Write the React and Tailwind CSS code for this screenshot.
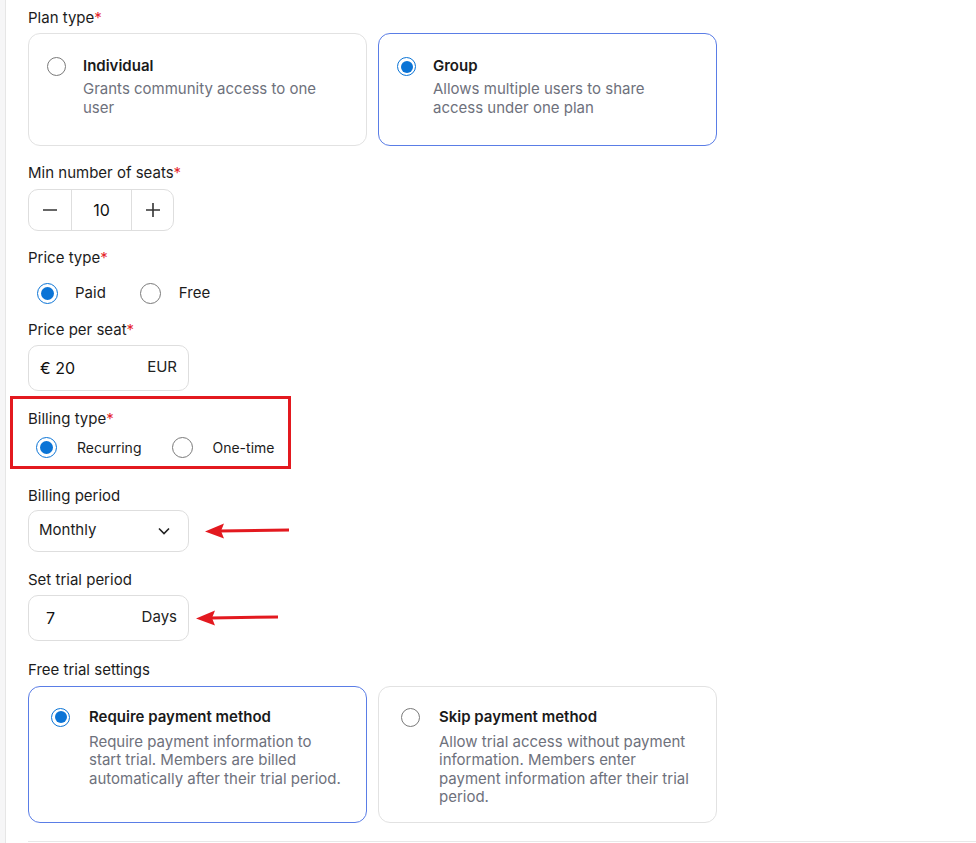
import React, { useState } from "react";

function Radio({ checked, size = "md" }) {
  return (
    <span
      className={`flex items-center justify-center rounded-full shrink-0 ${
        size === "lg" ? "w-[21px] h-[21px]" : "w-[19px] h-[19px]"
      } ${checked ? "border-[1.5px] border-[#0b74d6]" : "border-[1.5px] border-[#7a7a7a]"}`}
    >
      {checked && (
        <span
          className={`rounded-full bg-[#0b74d6] ${
            size === "lg" ? "w-[13px] h-[13px]" : "w-[12px] h-[12px]"
          }`}
        />
      )}
    </span>
  );
}

function Label({ children, required }) {
  return (
    <div className="text-[15px] leading-5 text-[#1c1c1c]">
      {children}
      {required && <span className="text-[#e5262b]">*</span>}
    </div>
  );
}

function OptionCard({ title, desc, checked, variant }) {
  const isTrial = variant === "trial";
  return (
    <div
      className={`flex rounded-[12px] border bg-white ${
        checked ? "border-[#5a7de6]" : "border-[#e2e2e2]"
      } ${isTrial ? "pl-[22px] pt-[20px] pb-[15px] pr-6" : "pl-[18px] pt-[22px] pb-[28px] pr-6"}`}
    >
      <div className="pt-[1px]">
        <Radio checked={checked} />
      </div>
      <div className={isTrial ? "ml-[19px]" : "ml-[17px]"}>
        <div className="text-[15px] leading-5 font-semibold text-[#1a1a1a]">{title}</div>
        <div
          className={`text-[15px] text-[#6e717c] ${
            isTrial ? "mt-[6px] leading-[18.5px]" : "mt-[3px] leading-[19px]"
          }`}
        >
          {desc}
        </div>
      </div>
    </div>
  );
}

function Arrow({ width }) {
  return (
    <svg width={width} height="20" viewBox={`0 0 ${width} 20`} className="shrink-0">
      <line x1="14" y1="10" x2={width} y2="9" stroke="#e3191f" strokeWidth="3" />
      <polygon points={`0,10.5 19,2.5 16,10 19,17.5`} fill="#e3191f" />
    </svg>
  );
}

export default function App() {
  const [seats, setSeats] = useState(10);

  return (
    <div className="min-h-screen bg-white flex" style={{ fontFamily: "Inter, 'Noto Sans', sans-serif" }}>
      {/* left rail */}
      <div className="w-[6px] shrink-0 bg-[#f6f6f7] border-r border-[#e6e6e6]" />

      <div className="flex-1 pl-[22px] pt-[8px]">
        {/* PLAN TYPE */}
        <Label required>Plan type</Label>
        <div className="mt-[5px] grid grid-cols-[339px_339px] gap-[11px]">
          <OptionCard title="Individual" desc="Grants community access to one user" />
          <OptionCard
            title="Group"
            desc={
              <>
                Allows multiple users to share
                <br />
                access under one plan
              </>
            }
            checked
          />
        </div>

        {/* SEATS */}
        <div className="mt-[17px]">
          <Label required>Min number of seats</Label>
          <div className="mt-[6px] flex w-[146px] h-[42px] rounded-[10px] border border-[#dedede] overflow-hidden">
            <button
              onClick={() => setSeats((s) => Math.max(1, s - 1))}
              className="w-[43px] flex items-center justify-center border-r border-[#dedede]"
            >
              <svg width="16" height="16" viewBox="0 0 16 16">
                <line x1="1" y1="8" x2="15" y2="8" stroke="#333" strokeWidth="1.6" />
              </svg>
            </button>
            <div className="w-[59px] flex items-center justify-center text-[16px] text-[#111]">{seats}</div>
            <button
              onClick={() => setSeats((s) => s + 1)}
              className="flex-1 flex items-center justify-center border-l border-[#dedede]"
            >
              <svg width="16" height="16" viewBox="0 0 16 16">
                <line x1="1" y1="8" x2="15" y2="8" stroke="#333" strokeWidth="1.6" />
                <line x1="8" y1="1" x2="8" y2="15" stroke="#333" strokeWidth="1.6" />
              </svg>
            </button>
          </div>
        </div>

        {/* PRICE TYPE */}
        <div className="mt-[17px]">
          <Label required>Price type</Label>
          <div className="mt-[14px] flex items-center pl-[9px] text-[15px] text-[#1c1c1c]">
            <Radio checked size="lg" />
            <span className="ml-[17px]">Paid</span>
            <span className="ml-[34px]">
              <Radio size="lg" />
            </span>
            <span className="ml-[18px]">Free</span>
          </div>
        </div>

        {/* PRICE PER SEAT */}
        <div className="mt-[15px]">
          <Label required>Price per seat</Label>
          <div className="mt-[5px] flex items-center justify-between w-[161px] h-[46px] rounded-[10px] border border-[#dedede] pl-[11px] pr-[11px]">
            <span className="text-[16px] text-[#111]">€ 20</span>
            <span className="text-[15px] text-[#222]">EUR</span>
          </div>
        </div>

        {/* BILLING TYPE (highlighted) */}
        <div className="mt-[5px] -ml-[18px] w-[281px] border-[3px] border-[#e3191f] pl-[15px] pt-[10px] pb-[8px]">
          <Label required>Billing type</Label>
          <div className="mt-[8px] flex items-center pl-[8px] text-[14px] text-[#1c1c1c]">
            <Radio checked size="lg" />
            <span className="ml-[20px]">Recurring</span>
            <span className="ml-[31px]">
              <Radio size="lg" />
            </span>
            <span className="ml-[19px]">One-time</span>
          </div>
        </div>

        {/* BILLING PERIOD */}
        <div className="mt-[17px]">
          <Label>Billing period</Label>
          <div className="mt-[4px] flex items-center">
            <div className="flex items-center justify-between w-[161px] h-[42px] rounded-[10px] border border-[#dedede] pl-[10px] pr-[17px]">
              <span className="text-[15px] text-[#1c1c1c]">Monthly</span>
              <svg width="14" height="14" viewBox="0 0 14 14">
                <polyline points="2,4.5 7,9.5 12,4.5" fill="none" stroke="#222" strokeWidth="1.6" />
              </svg>
            </div>
            <div className="ml-[16px]">
              <Arrow width={84} />
            </div>
          </div>
        </div>

        {/* TRIAL PERIOD */}
        <div className="mt-[18px]">
          <Label>Set trial period</Label>
          <div className="mt-[5px] flex items-center">
            <div className="flex items-center justify-between w-[161px] h-[46px] rounded-[10px] border border-[#dedede] pl-[17px] pr-[11px]">
              <span className="text-[16px] text-[#111]">7</span>
              <span className="text-[15px] text-[#222]">Days</span>
            </div>
            <div className="ml-[7px]">
              <Arrow width={82} />
            </div>
          </div>
        </div>

        {/* FREE TRIAL SETTINGS */}
        <div className="mt-[19px]">
          <Label>Free trial settings</Label>
          <div className="mt-[6px] grid grid-cols-[339px_339px] gap-[11px]">
            <OptionCard
              variant="trial"
              checked
              title="Require payment method"
              desc={
                <>
                  Require payment information to
                  <br />
                  start trial. Members are billed
                  <br />
                  automatically after their trial period.
                </>
              }
            />
            <OptionCard
              variant="trial"
              title="Skip payment method"
              desc={
                <>
                  Allow trial access without payment
                  <br />
                  information. Members enter
                  <br />
                  payment information after their trial
                  <br />
                  period.
                </>
              }
            />
          </div>
        </div>

        <div className="mt-[18px] border-t border-[#e8e8e8]" />
      </div>
    </div>
  );
}
